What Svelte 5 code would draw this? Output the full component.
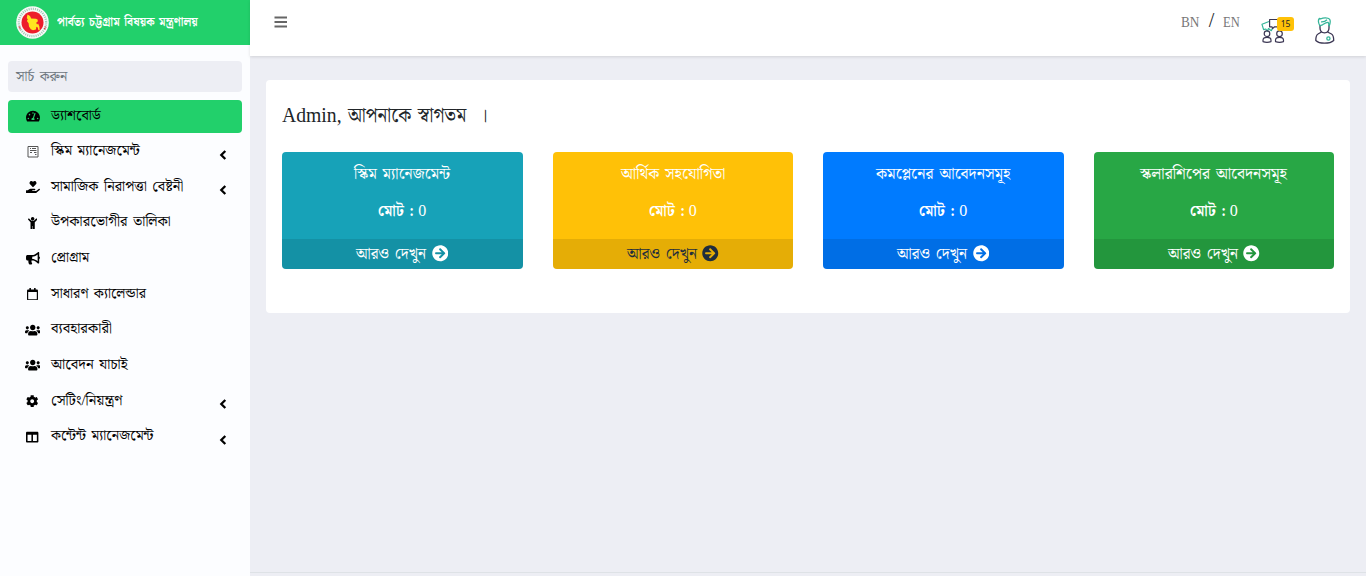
<script>
  const menu = [
    { label: 'ড্যাশবোর্ড', icon: 'gauge', w: 50, active: true },
    { label: 'স্কিম ম্যানেজমেন্ট', icon: 'form', w: 89, tree: true },
    { label: 'সামাজিক নিরাপত্তা বেষ্টনী', icon: 'hand', w: 132, tree: true },
    { label: 'উপকারভোগীর তালিকা', icon: 'child', w: 120 },
    { label: 'প্রোগ্রাম', icon: 'horn', w: 38 },
    { label: 'সাধারণ ক্যালেন্ডার', icon: 'calendar', w: 95 },
    { label: 'ব্যবহারকারী', icon: 'users', w: 61 },
    { label: 'আবেদন যাচাই', icon: 'users', w: 77 },
    { label: 'সেটিং/নিয়ন্ত্রণ', icon: 'cog', w: 72, tree: true },
    { label: 'কন্টেন্ট ম্যানেজমেন্ট', icon: 'columns', w: 103, tree: true }
  ];

  const cards = [
    { title: 'স্কিম ম্যানেজমেন্ট', w: 96, tone: 'info' },
    { title: 'আর্থিক সহযোগিতা', w: 104, tone: 'warning' },
    { title: 'কমপ্লেনের আবেদনসমূহ', w: 134, tone: 'primary' },
    { title: 'স্কলারশিপের আবেদনসমূহ', w: 147, tone: 'success' }
  ];

  // Condenses or widens a label so that it fills its measure exactly.
  function fit(node, width) {
    const natural = node.offsetWidth;
    node.style.transform = `scaleX(${width / natural})`;
    node.style.marginRight = `${width - natural}px`;
  }
</script>

{#snippet icon(name)}
  {#if name === 'gauge'}
    <svg class="ic" width="14" height="12.400" viewBox="0 0 576 512"><path d="M288 32C129 32 0 161 0 320c0 52.800 14.250 102.260 39.060 144.800 5.610 9.620 16.300 15.200 27.440 15.200h443c11.140 0 21.830-5.580 27.440-15.200C561.750 422.260 576 372.800 576 320c0-159-129-288-288-288zm0 64c14.700 0 26.580 10.130 30.320 23.650-1.110 2.260-2.640 4.230-3.450 6.670l-9.220 27.670c-5.130 3.490-10.970 6.010-17.640 6.010-17.670 0-32-14.330-32-32S270.330 96 288 96zM96 384c-17.670 0-32-14.330-32-32s14.330-32 32-32 32 14.330 32 32-14.330 32-32 32zm48-160c-17.670 0-32-14.330-32-32s14.330-32 32-32 32 14.330 32 32-14.330 32-32 32zm246.770-72.410l-61.330 184C343.130 347.330 352 364.540 352 384c0 11.720-3.380 22.550-8.880 32H232.880c-5.500-9.450-8.880-20.280-8.880-32 0-33.940 26.500-61.430 59.900-63.590l61.340-184.010c4.170-12.560 17.730-19.450 30.360-15.170 12.570 4.190 19.350 17.790 15.170 30.360zM480 384c-17.670 0-32-14.330-32-32s14.330-32 32-32 32 14.330 32 32-14.330 32-32 32z" /></svg>
  {:else if name === 'form'}
    <svg class="ic line" width="12" height="13" viewBox="0 0 12 13"><path d="M1 1.500h10v10.500H1z" /><path d="M3 3.500h1M5 3.500h4M3 5.500h6.500M3 7.500h2M7 7.500h2.500M8 9.500h1.500" /></svg>
  {:else if name === 'hand'}
    <svg class="ic" width="14" height="12.400" viewBox="0 0 576 512"><path d="M275.300 250.500c7 7.400 18.400 7.400 25.500 0l108.900-114.200c31.600-33.200 29.800-88.200-5.600-118.800-30.800-26.700-76.700-21.900-104.900 7.700L288 36.900l-11.100-11.600C248.700-4.400 202.800-9.200 172 17.500c-35.300 30.600-37.200 85.600-5.600 118.800l108.900 114.200zm290 77.600c-11.800-10.700-30.200-10-42.600 0L430.300 402c-11.300 9.100-25.400 14-40 14H272c-8.800 0-16-7.200-16-16s7.200-16 16-16h78.300c15.900 0 30.700-10.900 33.300-26.600 3.300-20-12.100-37.400-31.600-37.400H192c-27 0-53.100 9.300-74.100 26.300L71.400 384H16c-8.800 0-16 7.200-16 16v96c0 8.800 7.200 16 16 16h356.800c14.500 0 28.600-4.900 40-14L564 377c15.200-12.100 16.400-35.300 1.300-48.900z" /></svg>
  {:else if name === 'child'}
    <svg class="ic" width="9.300" height="12.400" viewBox="0 0 384 512"><path d="M120 72c0-39.765 32.235-72 72-72s72 32.235 72 72c0 39.764-32.235 72-72 72s-72-32.236-72-72zm254.627 1.373c-12.496-12.497-32.758-12.497-45.254 0L242.745 160H141.254L54.627 73.373c-12.496-12.497-32.758-12.497-45.254 0-12.497 12.497-12.497 32.758 0 45.255L104 213.254V480c0 17.673 14.327 32 32 32h16c17.673 0 32-14.327 32-32V368h16v112c0 17.673 14.327 32 32 32h16c17.673 0 32-14.327 32-32V213.254l94.627-94.627c12.497-12.497 12.497-32.757 0-45.254z" /></svg>
  {:else if name === 'horn'}
    <svg class="ic" width="14" height="12.400" viewBox="0 0 576 512"><path d="M576 240c0-23.630-12.950-44.040-32-55.120V32.010C544 23.260 537.020 0 512 0c-7.120 0-14.190 2.380-19.980 7.020l-85.030 68.030C364.280 109.190 310.660 128 256 128H64c-35.350 0-64 28.650-64 64v96c0 35.350 28.650 64 64 64h33.700c-1.390 10.480-2.180 21.140-2.180 32 0 39.770 9.260 77.350 25.560 110.940 5.190 10.690 16.520 17.060 28.400 17.060h74.280c26.050 0 41.690-29.840 25.900-50.560-16.400-21.520-26.150-48.360-26.150-77.440 0-11.110 1.620-21.790 4.410-32H256c54.660 0 108.280 18.810 150.980 52.950l85.030 68.030a32.023 32.023 0 0 0 19.980 7.020c24.920 0 32-22.780 32-32V295.130C563.050 284.040 576 263.630 576 240zm-96 141.420l-33.050-26.440C392.950 311.780 325.120 288 256 288v-96c69.120 0 136.950-23.780 190.950-66.980L480 98.580v282.840z" /></svg>
  {:else if name === 'calendar'}
    <svg class="ic" width="11" height="12.500" viewBox="0 0 448 512"><path d="M400 64h-48V12c0-6.600-5.400-12-12-12h-40c-6.600 0-12 5.400-12 12v52H160V12c0-6.600-5.400-12-12-12h-40c-6.600 0-12 5.400-12 12v52H48C21.500 64 0 85.500 0 112v352c0 26.500 21.500 48 48 48h352c26.500 0 48-21.500 48-48V112c0-26.500-21.500-48-48-48zm-6 400H54c-3.300 0-6-2.700-6-6V160h352v298c0 3.300-2.700 6-6 6z" /></svg>
  {:else if name === 'users'}
    <svg class="ic" width="15.500" height="12.400" viewBox="0 0 640 512"><path d="M96 224c35.300 0 64-28.700 64-64s-28.700-64-64-64-64 28.700-64 64 28.700 64 64 64zm448 0c35.300 0 64-28.700 64-64s-28.700-64-64-64-64 28.700-64 64 28.700 64 64 64zm32 32h-64c-17.600 0-33.500 7.100-45.100 18.600 40.300 22.100 68.900 62 75.100 109.400h66c17.700 0 32-14.300 32-32v-32c0-35.300-28.700-64-64-64zm-256 0c61.900 0 112-50.100 112-112S381.900 32 320 32 208 82.100 208 144s50.100 112 112 112zm76.800 32h-8.300c-20.800 10-43.900 16-68.500 16s-47.600-6-68.500-16h-8.300C179.600 288 128 339.600 128 403.200V432c0 26.500 21.500 48 48 48h288c26.500 0 48-21.500 48-48v-28.800c0-63.600-51.600-115.200-115.200-115.200zm-223.700-13.400C161.500 263.100 145.600 256 128 256H64c-35.300 0-64 28.700-64 64v32c0 17.700 14.300 32 32 32h65.900c6.300-47.400 34.900-87.300 75.200-109.400z" /></svg>
  {:else if name === 'cog'}
    <svg class="ic" width="12.400" height="12.400" viewBox="0 0 512 512"><path d="M487.400 315.700l-42.600-24.600c4.300-23.200 4.300-47 0-70.200l42.600-24.600c4.900-2.800 7.100-8.600 5.500-14-11.100-35.600-30-67.800-54.700-94.600-3.800-4.100-10-5.100-14.800-2.300L380.800 110c-17.900-15.400-38.500-27.300-60.800-35.100V25.800c0-5.600-3.900-10.500-9.400-11.700-36.700-8.200-74.300-7.800-109.200 0-5.500 1.200-9.400 6.100-9.400 11.700V75c-22.200 7.900-42.800 19.800-60.800 35.100L88.700 85.500c-4.900-2.800-11-1.900-14.800 2.300-24.700 26.700-43.600 58.900-54.700 94.600-1.700 5.400.6 11.200 5.500 14L67.300 221c-4.300 23.200-4.300 47 0 70.200l-42.600 24.600c-4.900 2.800-7.100 8.600-5.500 14 11.100 35.600 30 67.800 54.700 94.600 3.800 4.100 10 5.100 14.800 2.300l42.600-24.600c17.900 15.400 38.500 27.300 60.800 35.100v49.200c0 5.600 3.900 10.500 9.400 11.700 36.700 8.200 74.300 7.800 109.200 0 5.500-1.200 9.400-6.100 9.400-11.700v-49.200c22.200-7.900 42.800-19.800 60.800-35.100l42.600 24.600c4.900 2.800 11 1.900 14.800-2.300 24.700-26.700 43.600-58.900 54.700-94.600 1.500-5.500-.7-11.300-5.600-14.100zM256 336c-44.100 0-80-35.900-80-80s35.900-80 80-80 80 35.900 80 80-35.900 80-80 80z" /></svg>
  {:else}
    <svg class="ic" width="12.400" height="12.400" viewBox="0 0 512 512"><path d="M464 32H48C21.490 32 0 53.490 0 80v352c0 26.510 21.490 48 48 48h416c26.510 0 48-21.490 48-48V80c0-26.510-21.490-48-48-48zM224 416H64V160h160v256zm224 0H288V160h160v256z" /></svg>
  {/if}
{/snippet}

<div class="app">
  <aside>
    <div class="brand">
      <svg class="logo" width="33" height="33" viewBox="0 0 33 33">
        <circle cx="16.500" cy="16.500" r="16.300" fill="#f8f9f7" />
        <circle cx="16.500" cy="16.500" r="13.700" fill="none" stroke="#4c9b78" stroke-width="2.200" stroke-dasharray="1 1.150" opacity=".55" />
        <path d="M3.400 20.500l1 2.800M28.600 23.300l1-2.800" stroke="#e33b45" stroke-width="1.800" stroke-dasharray="1.200 1" />
        <circle cx="16.500" cy="16.500" r="11" fill="#ed1c2b" />
        <path fill="#ffe51f" d="M11.500 8.500l2.500 1.600 1.200 2.500 4.800.2 1.800.9-.2 2.100-1.500 1 1 1.700 1-1 1.300 2.900.3 4-1.300-.5-.8-2.600-1.200-.6-.5 2.700-2.900.8-2.200-.9-1.800-2.700-.4-3.300-1.700-2.300.9-1.500-1-1.600z" />
      </svg>
      <strong use:fit={141}>পার্বত্য চট্টগ্রাম বিষয়ক মন্ত্রণালয়</strong>
    </div>
    <div class="search"><span use:fit={51}>সার্চ করুন</span></div>
    <nav>
      {#each menu as item}
        <a class:active={item.active}>
          <i>{@render icon(item.icon)}</i>
          <span class="label" use:fit={item.w}>{item.label}</span>
          {#if item.tree}
            <svg class="angle" width="8" height="10" viewBox="0 0 8 10"><path d="M6.300 1L2.300 5l4 4" /></svg>
          {/if}
        </a>
      {/each}
    </nav>
  </aside>

  <div class="page">
    <header>
      <svg class="bars" width="14" height="12" viewBox="0 0 14 12"><path d="M.5 1.500h12.500M.5 6h12.500M.5 10.500h12.500" /></svg>
      <div class="lang"><span use:fit={18}>BN</span><b>/</b><span use:fit={17}>EN</span></div>
      <div class="notice">
        <svg width="26" height="26" viewBox="0 0 26 26">
          <g fill="none" stroke-width="1.200" stroke-linejoin="round">
            <path stroke="#35b599" d="M8 4.500L1 7.300l1.600 5.300 2.200-.6 1.500 2.200 1.200-2.700 2.800 2.200 1-2.300" />
            <path stroke="#3b3653" d="M8.600 2.500h13v7.300h-8l-2 1.700-.5-1.700H8.600z" />
            <g stroke="#3b3653"><circle cx="6" cy="16.700" r="2.800" /><path d="M2 24.600v-1.400c0-2 2-2.800 4-2.800s4 .8 4 2.800v1.400q-4 1.400-8 0z" /><circle cx="18.500" cy="16.700" r="2.800" /><path d="M14.500 24.600v-1.400c0-2 2-2.800 4-2.800s4 .8 4 2.800v1.400q-4 1.400-8 0z" /></g>
          </g>
        </svg>
        <em>15</em>
      </div>
      <svg class="user" width="20" height="27" viewBox="0 0 20 27">
        <g fill="none" stroke="#3b3653" stroke-width="1.300" stroke-linejoin="round">
          <path d="M5 8v3c0 3 2 4.800 4.500 4.800S14 14 14 11V8" />
          <path d="M6.500 15L3 17C1 18 .8 20 .8 23.500c2 2 5 2.700 8.700 2.700s7-.7 9.200-2.700c0-3.500-.2-5.500-2.200-6.500L12.500 15" />
          <g stroke="#35b599"><path d="M4.800 8.700C3.400 6 3 3 4.300 1.500l1.700.3C8 .6 13 .4 14.500 2.200c1.200 1.500.8 4-.3 6.700l-1-3.500C11.500 4.900 9.500 6.500 7.500 7.800L5 8.700zM6 4.800c2.300.2 4.500-.5 6-2" /><circle cx="13.400" cy="21.500" r="1.600" /></g>
        </g>
      </svg>
    </header>

    <main>
      <section>
        <h1><span use:fit={60}>Admin,</span><span use:fit={140}>আপনাকে স্বাগতম &nbsp;।</span></h1>
        <div class="cards">
          {#each cards as card}
            <article class={card.tone}>
              <h2><span use:fit={card.w}>{card.title}</span></h2>
              <p><strong use:fit={36}>মোট :</strong><span>0</span></p>
              <footer>
                <span use:fit={70}>আরও দেখুন</span>
                <svg width="16.500" height="16.500" viewBox="0 0 512 512"><path fill="currentColor" d="M256 8c137 0 248 111 248 248S393 504 256 504 8 393 8 256 119 8 256 8zm-28.900 143.600l75.500 72.400H120c-13.300 0-24 10.700-24 24v16c0 13.300 10.700 24 24 24h182.600l-75.500 72.400c-9.700 9.300-9.900 24.800-.4 34.300l11 10.900c9.400 9.400 24.600 9.400 33.900 0L404.300 273c9.400-9.400 9.400-24.600 0-33.900L271.600 106.300c-9.400-9.400-24.600-9.400-33.900 0l-11 10.900c-9.500 9.600-9.300 25.100.4 34.400z" /></svg>
              </footer>
            </article>
          {/each}
        </div>
      </section>
    </main>
    <div class="foot"></div>
  </div>
</div>

<style>
  :global(body) { margin: 0; overflow: hidden; }
  .app {
    display: flex; height: 576px; background: #edeef4; color: #212529; word-spacing: 2px;
    font-family: "Liberation Serif", "Noto Serif Bengali", "Noto Sans Bengali", serif;
  }
  .app :is(span, strong) { display: inline-block; white-space: nowrap; transform-origin: 0 50%; }
  aside { width: 250px; flex: none; background: #fcfdff; }
  .brand { height: 45px; display: flex; align-items: center; box-sizing: border-box; padding-left: 16px; background: #22d06b; color: #fff; }
  .logo { flex: none; margin-right: 8px; }
  .brand strong { font-size: 13px; line-height: 20px; margin-top: -2px; }
  .search { height: 31px; margin: 16px 8px 8px; padding-left: 8px; border-radius: 4px; background: #edeef4; color: #6c757d; font-size: 14px; line-height: 31px; }
  nav { display: flex; flex-direction: column; gap: 2.650px; padding: 0 8px; }
  nav a { display: flex; align-items: center; height: 33px; border-radius: 4px; color: #000; }
  nav a.active { background: #22d06b; }
  nav i { width: 17px; height: 13px; margin: -1px 9.500px 0 16px; display: flex; align-items: center; justify-content: center; }
  .ic { fill: #000; flex: none; }
  .ic.line { fill: none; stroke: #555; stroke-width: 1; }
  .label { font-size: 15px; line-height: 24px; margin-top: -4px; }
  .angle { margin: 5px 15.500px 0 auto; fill: none; stroke: #000; stroke-width: 2.300; }
  .page { flex: 1; display: flex; flex-direction: column; min-width: 0; }
  header { height: 56px; display: flex; align-items: flex-start; background: #fff; box-shadow: 0 1px 3px #0000001f; }
  .bars { margin: 16px auto 0 24px; stroke: #666; stroke-width: 1.900; }
  .lang { display: flex; align-items: center; margin-top: 12px; height: 22px; color: #777; font-size: 14px; }
  .lang b { color: #212529; font-size: 20px; font-weight: 400; margin: -6px 9px 0 9px; }
  .notice { display: flex; position: relative; width: 33px; margin: 17px 20px 0 21px; }
  .notice em { position: absolute; left: 16px; top: 0; width: 17px; height: 14px; border-radius: 3px; background: #ffc107; color: #212529; font: 8.500px/13px "Noto Sans", sans-serif; text-align: center; }
  .user { margin: 17px 31.500px 0 0.500px; }
  main { flex: 1; padding: 24px 16px 0; }
  section { height: 233px; box-sizing: border-box; padding: 16px; border-radius: 4px; background: #fff; }
  h1 { display: flex; gap: 6px; margin: 0 0 20px; height: 36px; font-size: 20px; line-height: 38px; font-weight: 400; }
  .cards { display: grid; grid-template-columns: repeat(4, 1fr); gap: 30px; }
  article { height: 117px; display: flex; flex-direction: column; border-radius: 4px; overflow: hidden; color: #fff; text-align: center; }
  h2 { margin: 10px 0 0; font-size: 16px; line-height: 24px; height: 24px; font-weight: 400; }
  p { display: flex; justify-content: center; gap: 4px; margin: 13px 0 0; height: 24px; font-size: 16px; line-height: 24px; }
  footer { margin-top: auto; height: 30px; padding-bottom: 1px; box-sizing: border-box; display: flex; align-items: center; justify-content: center; gap: 5px; background: #0000001a; font-size: 16px; line-height: 24px; }
  .info { background: #17a2b8; }
  .warning { background: #ffc107; }
  .warning footer { color: #1f2d3d; }
  .primary { background: #007bff; }
  .success { background: #28a745; }
  .foot { height: 3px; border-top: 1px solid #dee2e6; }
</style>
